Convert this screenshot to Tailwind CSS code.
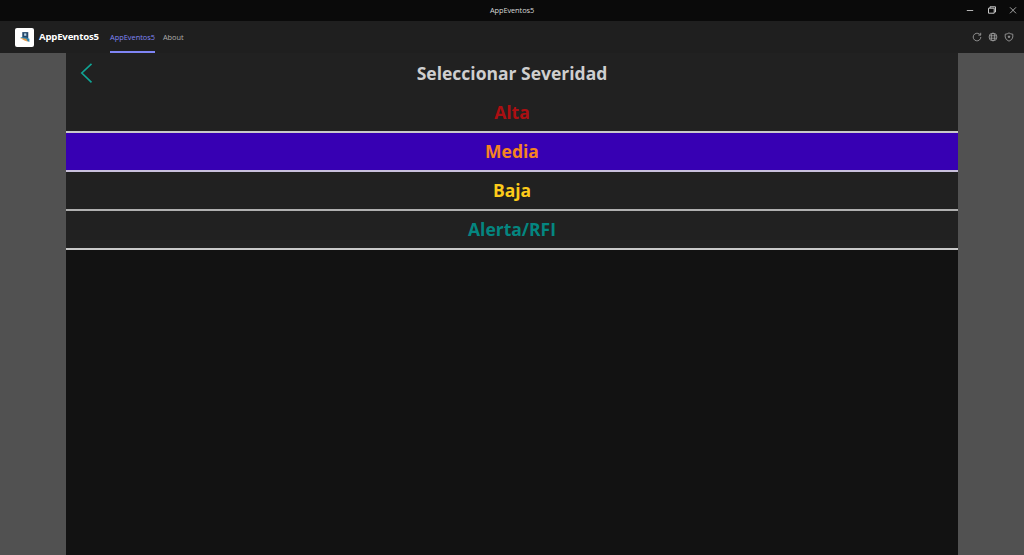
<!DOCTYPE html>
<html lang="es">
<head>
<meta charset="utf-8">
<title>AppEventos5</title>
<script src="https://cdn.jsdelivr.net/npm/@tailwindcss/browser@4"></script>
</head>
<body class="h-[555px] w-[1024px] overflow-hidden bg-[#515151] font-['Open_Sans',sans-serif] flex flex-col">
  <div class="h-[21px] shrink-0 bg-[#0a0a0a] grid grid-cols-[1fr_auto_1fr] items-center text-[#d6d6d6]">
    <span></span>
    <span class="text-[7.4px] leading-none tracking-[-0.01em]">AppEventos5</span>
    <div class="flex items-center justify-end gap-[13.5px] pr-[7px] -mt-px">
      <svg class="size-[8px]" viewBox="0 0 8 8" fill="none" stroke="#b5b5b5"><path d="M.8 4.5h6.4"/></svg>
      <svg class="size-[8px]" viewBox="0 0 8 8" fill="none" stroke="#c8c8c8"><path d="M.5 2.2h5.7v5H.5zM2 2V.8h5.5v5.2H6.4"/></svg>
      <svg class="size-[8px]" viewBox="0 0 8 8" fill="none" stroke="#b5b5b5" stroke-width=".9"><path d="M1 1.3l6 6M7 1.3l-6 6"/></svg>
    </div>
  </div>
  <header class="h-[32px] shrink-0 bg-[#1f1f1f] flex items-center pl-[15px] pr-[10px]">
    <div class="size-[19px] rounded-[2px] bg-white flex items-center justify-center">
      <svg class="size-[12px]" viewBox="0 0 11 11"><path d="M3 1h5.5v5.5H3z" fill="#25486b"/><path d="M4.7 2.2h2v2.2h-2z" fill="#b9d4e4"/><path d="M1 5.5l6 .5 2.5 1v3L7 9z" fill="#2e83ad"/><path d="M1 6.4L6.6 7.2 8.2 9.8 5 8.6z" fill="#e39a4b"/></svg>
    </div>
    <span class="ml-[5px] w-[60px] whitespace-nowrap text-[9.6px] font-bold tracking-[-0.02em] text-white">AppEventos5</span>
    <nav class="ml-[11px] flex h-full gap-[8px] text-[7.4px]">
      <span class="flex w-[45px] items-center whitespace-nowrap border-b-2 border-[#7f85f5] pt-[3px] text-[#7f85f5]">AppEventos5</span>
      <span class="flex items-center border-b-2 border-transparent pt-[3px] tracking-[-0.01em] text-[#adadad]">About</span>
    </nav>
    <div class="ml-auto flex gap-[6px]">
      <svg class="size-[10px]" viewBox="0 0 10 10" fill="none" stroke="#999" stroke-width=".9"><path d="M8.8 5A3.8 3.8 0 1 1 7.4 2.1L8.6 3M8.7.8V3.1H6.3"/></svg>
      <svg class="size-[10px]" viewBox="0 0 10 10" fill="none" stroke="#999" stroke-width=".9"><circle cx="5" cy="5" r="3.9"/><ellipse cx="5" cy="5" rx="1.7" ry="3.9"/><path d="M1.3 3.8h7.4M1.3 6.2h7.4"/></svg>
      <svg class="size-[10px]" viewBox="0 0 10 10" fill="none" stroke="#999" stroke-width=".9"><path d="M5 .9Q6.8 2.2 8.8 2.2V5Q8.6 7.8 5 9.2 1.4 7.8 1.2 5V2.2Q3.2 2.2 5 .9z"/><circle cx="5" cy="4.8" r=".8" fill="#999"/></svg>
    </div>
  </header>
  <main class="mx-[66px] flex-1 bg-[#121212] text-[17.5px] font-bold leading-none">
    <div class="grid h-[40px] grid-cols-[40px_1fr_40px] items-center bg-[#212121]">
      <svg class="ml-[14px] h-[20px] w-[13px]" viewBox="0 0 13 20" fill="none" stroke="#10a595" stroke-width="1.6"><path d="M11.5 .8L1.8 10l9.7 9.3"/></svg>
      <h1 class="pt-[2px] text-center text-[#cfcfcf]">Seleccionar Severidad</h1>
    </div>
    <ul class="text-center">
      <li class="flex h-[40px] items-center justify-center border-b-2 border-[#c9c9c9] bg-[#212121] pt-[2px] text-[#ab0f12]">Alta</li>
      <li class="flex h-[39px] items-center justify-center border-b-2 border-[#c9c0dc] bg-[#3700b3] text-[#f5841f]">Media</li>
      <li class="flex h-[39px] items-center justify-center border-b-2 border-[#b0b0b0] bg-[#212121] text-[#fccb1a]">Baja</li>
      <li class="flex h-[39px] items-center justify-center border-b-2 border-[#c9c9c9] bg-[#212121] pt-[1px] text-[#048680]">Alerta/RFI</li>
    </ul>
  </main>
</body>
</html>
